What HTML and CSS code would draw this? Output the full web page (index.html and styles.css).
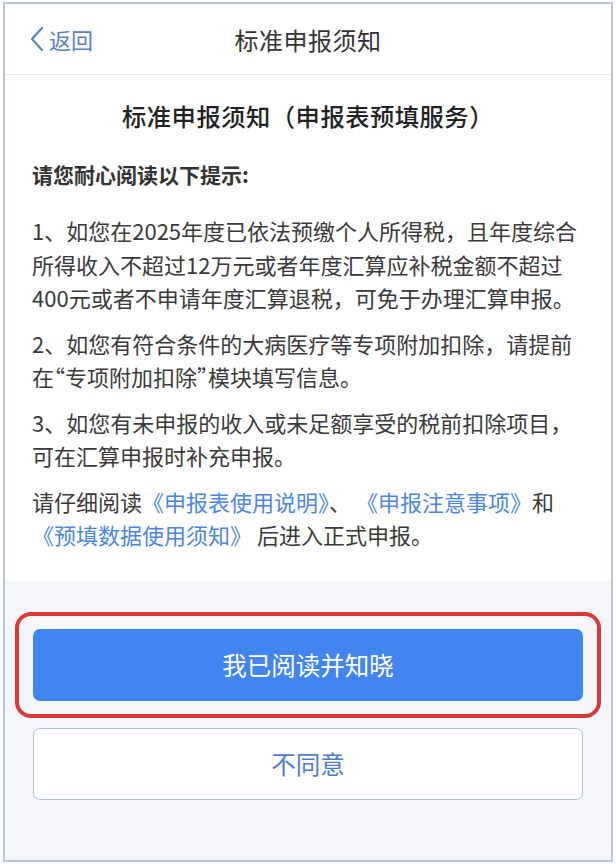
FILE: index.html
```html
<!DOCTYPE html>
<html lang="zh-CN">
<head>
<meta charset="utf-8">
<title>标准申报须知</title>
<link rel="stylesheet" href="styles.css">
</head>
<body>
<div class="frame">
  <header class="navbar">
    <a class="back">
      <svg class="chev" width="15" height="26" viewBox="0 0 15 26"><path d="M13 2 L3 13 L13 24" fill="none" stroke="#5a82c8" stroke-width="2.2" stroke-linecap="round" stroke-linejoin="round"/></svg>
      <span>返回</span>
    </a>
    <div class="nav-title">标准申报须知</div>
  </header>
  <main class="content">
    <h1 class="title">标准申报须知（申报表预填服务）</h1>
    <p class="lead">请您耐心阅读以下提示:</p>
    <p class="para">1、如您在2025年度已依法预缴个人所得税，且年度综合所得收入不超过12万元或者年度汇算应补税金额不超过400元或者不申请年度汇算退税，可免于办理汇算申报。</p>
    <p class="para">2、如您有符合条件的大病医疗等专项附加扣除，请提前在<span class="q">“专项附加扣除”</span>模块填写信息。</p>
    <p class="para">3、如您有未申报的收入或未足额享受的税前扣除项目，可在汇算申报时补充申报。</p>
    <p class="para">请仔细阅读<a class="link">《申报表使用说明》</a>、 <a class="link">《申报注意事项》</a>和<a class="link">《预填数据使用须知》</a> 后进入正式申报。</p>
  </main>
  <footer class="actions">
    <div class="highlight">
      <button class="btn btn-primary">我已阅读并知晓</button>
    </div>
    <button class="btn btn-secondary">不同意</button>
  </footer>
</div>
</body>
</html>
```
FILE: styles.css
```css
* { box-sizing: border-box; }
html, body { margin: 0; padding: 0; }
body {
  width: 616px;
  height: 864px;
  background: #ffffff;
  font-family: "Noto Sans CJK SC", "Noto Sans", sans-serif;
  overflow: hidden;
}
.frame {
  margin: 2px 3px 2px 3px;
  height: 860px;
  border: 2px solid #b8c5dc;
  display: flex;
  flex-direction: column;
  background: #f4f6fa;
}
.navbar {
  height: 71px;
  flex: none;
  background: #fff;
  border-bottom: 1px solid #e6e8ec;
  display: flex;
  align-items: center;
  justify-content: center;
  position: relative;
}
.back {
  position: absolute;
  left: 24px;
  top: 0;
  bottom: 0;
  display: flex;
  align-items: center;
  gap: 5px;
  color: #5a80c6;
  font-size: 22px;
}
.nav-title {
  font-size: 24px;
  color: #333;
  letter-spacing: 0.5px;
}
.content {
  background: #fff;
  padding: 23px 27px 29px 27px;
  flex: none;
}
.title {
  margin: 0;
  text-align: center;
  font-size: 24.3px;
  font-weight: 500;
  color: #222;
  line-height: 36px;
  letter-spacing: 0.5px;
}
.lead {
  margin: 23px 0 0;
  font-size: 21px;
  font-weight: 700;
  color: #333;
  line-height: 34px;
}
.para {
  margin: 23px 0 0;
  font-size: 22px;
  line-height: 33.5px;
  color: #3a3a3a;
}
.para + .para { margin-top: 12px; }
.q { font-feature-settings: "halt" 1; }
.link {
  color: #4b86e0;
  white-space: nowrap;
}
.actions {
  flex: 1;
  padding: 31px 10px 0 10px;
}
.highlight {
  border: 4px solid #d9393a;
  border-radius: 16px;
  padding: 13px 14px;
}
.btn {
  display: block;
  width: 100%;
  height: 72px;
  border-radius: 7px;
  font-family: inherit;
  font-size: 24.5px;
}
.btn-primary {
  background: #4285f0;
  color: #fff;
  border: none;
}
.btn-secondary {
  margin: 10px 18px 0;
  width: calc(100% - 36px);
  background: #fff;
  color: #4a7ed4;
  border: 1px solid #b4c0d6;
}
```
